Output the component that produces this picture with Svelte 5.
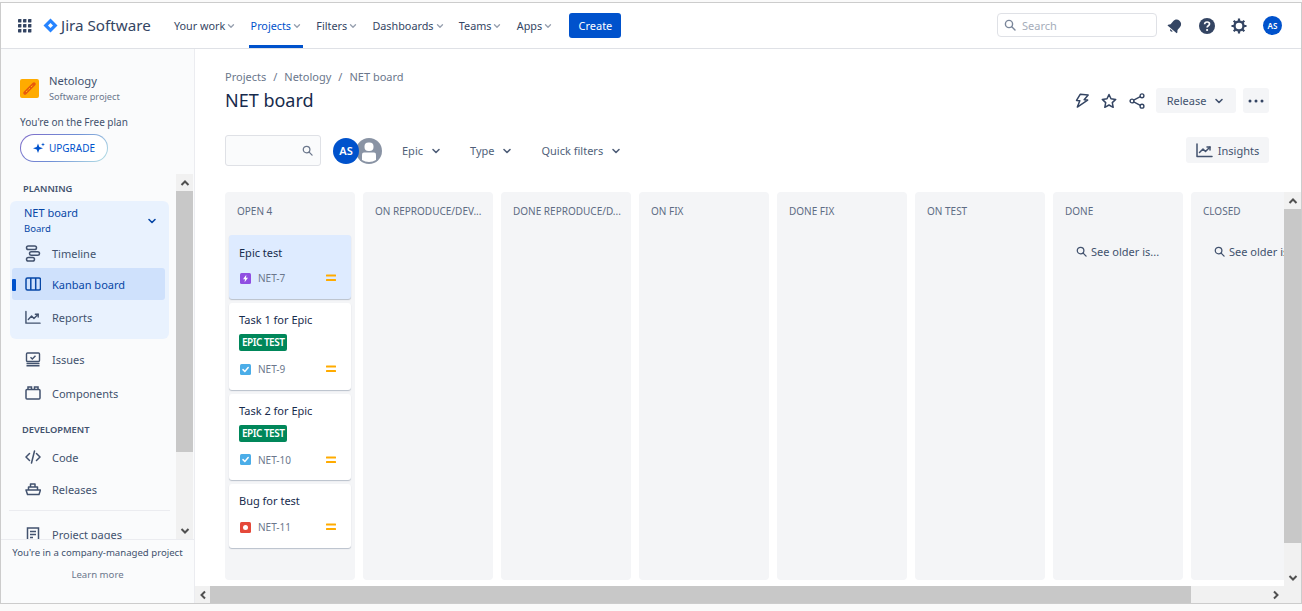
<script>
	const topNav = [
		{ label: 'Your work' },
		{ label: 'Projects', active: true },
		{ label: 'Filters' },
		{ label: 'Dashboards' },
		{ label: 'Teams' },
		{ label: 'Apps' }
	];

	const columns = [
		{ title: 'OPEN 4' },
		{ title: 'ON REPRODUCE/DEV...' },
		{ title: 'DONE REPRODUCE/D...' },
		{ title: 'ON FIX' },
		{ title: 'DONE FIX' },
		{ title: 'ON TEST' },
		{ title: 'DONE', older: true },
		{ title: 'CLOSED', older: true, cut: true }
	];

	const cards = [
		{ title: 'Epic test', key: 'NET-7', type: 'epic', selected: true },
		{ title: 'Task 1 for Epic', key: 'NET-9', type: 'task', epic: 'EPIC TEST' },
		{ title: 'Task 2 for Epic', key: 'NET-10', type: 'task', epic: 'EPIC TEST' },
		{ title: 'Bug for test', key: 'NET-11', type: 'bug' }
	];
</script>

{#snippet chevron(size = 12)}
	<svg class="chev" width={size} height={size} viewBox="0 0 12 12" fill="none">
		<path d="M3 4.500 6 7.500 9 4.500" stroke="currentColor" stroke-width="1.600" stroke-linecap="round" stroke-linejoin="round" />
	</svg>
{/snippet}

{#snippet loupe(size = 12)}
	<svg width={size} height={size} viewBox="0 0 12 12" fill="none">
		<circle cx="5" cy="5" r="3.600" stroke="currentColor" stroke-width="1.400" />
		<path d="M7.800 7.800 11 11" stroke="currentColor" stroke-width="1.400" stroke-linecap="round" />
	</svg>
{/snippet}

{#snippet arrow(dir)}
	<svg class="arrow {dir}" width="10" height="10" viewBox="0 0 10 10" fill="none">
		<path d="M1.500 7 5 3.500 8.500 7" stroke="#505050" stroke-width="2" />
	</svg>
{/snippet}

{#snippet chart()}
	<svg width="17" height="15" viewBox="0 0 17 15" fill="none" stroke="currentColor" stroke-width="1.500" stroke-linecap="round" stroke-linejoin="round">
		<path d="M1 1v12.500h15" />
		<path d="M3.500 9.500 7 6l2.500 2.500L14 4" />
		<path d="M11 4h3v3" />
	</svg>
{/snippet}

<div class="frame">
	<header class="topbar">
		<svg class="apps" width="14" height="14" viewBox="0 0 14 14" fill="#344563">
			{#each [0, 5, 10] as y}
				{#each [0, 5, 10] as x}
					<rect x={x} y={y} width="3.400" height="3.400" rx="0.400" />
				{/each}
			{/each}
		</svg>
		<svg class="logo" width="15" height="15" viewBox="0 0 15 15">
			<path d="M7.500.5 14.500 7.500 7.500 14.500.5 7.500Z" fill="#2684ff" />
			<path d="M7.500 5 10 7.500 7.500 10 5 7.500Z" fill="#fff" />
		</svg>
		<span class="brand">Jira Software</span>
		<nav class="topnav">
			{#each topNav as item}
				<span class="topnav-item" class:active={item.active}>
					{item.label}{@render chevron(10)}
				</span>
			{/each}
		</nav>
		<button class="create">Create</button>
		<div class="search">
			{@render loupe(12)}
			<span>Search</span>
		</div>
		<div class="top-icons">
			<svg width="16" height="16" viewBox="0 0 16 16" fill="#344563">
				<g transform="rotate(40 8 8)">
					<path d="M8 1C5.400 1 3.500 3 3.500 5.500v4L2 11.500v1h12v-1l-1.500-2v-4C12.500 3 10.600 1 8 1Z" />
					<path d="M6.200 13.500a1.900 1.900 0 0 0 3.600 0Z" />
				</g>
			</svg>
			<svg width="18" height="18" viewBox="0 0 18 18">
				<circle cx="9" cy="9" r="8" fill="#344563" />
				<path d="M6.600 7.200C6.700 5.800 7.700 5 9.100 5c1.400 0 2.400.8 2.400 2 0 1.900-2.400 1.700-2.400 3.600" fill="none" stroke="#fff" stroke-width="1.700" />
				<circle cx="9.100" cy="13" r="1.100" fill="#fff" />
			</svg>
			<svg width="16" height="16" viewBox="0 0 16 16" fill="none" stroke="#344563">
				<circle cx="8" cy="8" r="4.500" stroke-width="2.400" />
				<path d="M8 .5v2.500M8 13v2.500M.5 8H3M13 8h2.500M2.700 2.700l1.800 1.800M11.500 11.500l1.800 1.800M13.300 2.700l-1.800 1.800M4.500 11.500l-1.800 1.800" stroke-width="2.200" />
			</svg>
			<span class="avatar small">AS</span>
		</div>
	</header>

	<div class="body">
		<aside class="sidebar">
			<div class="project">
				<svg class="project-logo" width="19" height="19" viewBox="0 0 19 19">
					<rect width="19" height="19" rx="2" fill="#ffab00" />
					<path d="M5 14 14 5" stroke="#e8590c" stroke-width="3.500" stroke-linecap="round" />
					<path d="M6 13 13 6" stroke="#ffc400" stroke-width="1" stroke-dasharray="2 1.500" />
				</svg>
				<div>
					<div class="project-name">Netology</div>
					<div class="project-type">Software project</div>
				</div>
			</div>
			<div class="plan">You're on the Free plan</div>
			<button class="upgrade">
				<svg width="12" height="12" viewBox="0 0 12 12" fill="#0052cc">
					<path d="M5 1.500 6.300 5 10 6.300 6.300 7.500 5 11 3.700 7.500 0 6.300 3.700 5Z" />
					<path d="M10 .5 10.500 2 12 2.500 10.500 3 10 4.500 9.500 3 8 2.500 9.500 2Z" />
				</svg>
				UPGRADE
			</button>

			<div class="side-scroll">
				<div class="side-list">
					<h4 class="planning">PLANNING</h4>
					<div class="group">
						<div class="group-head">
							<div>
								<div class="group-title">NET board</div>
								<div class="group-sub">Board</div>
							</div>
							{@render chevron(12)}
						</div>
						<div class="side-item first">
							<svg width="16" height="17" viewBox="0 0 16 17" fill="none" stroke="currentColor" stroke-width="1.500">
								<rect x="1.500" y="1" width="10" height="3.600" rx="1.800" />
								<rect x="4.500" y="6.700" width="10" height="3.600" rx="1.800" />
								<rect x="1.500" y="12.400" width="8" height="3.600" rx="1.800" />
							</svg>
							Timeline
						</div>
						<div class="side-item selected">
							<span class="marker"></span>
							<svg width="16" height="14" viewBox="0 0 16 14" fill="none" stroke="currentColor" stroke-width="1.500">
								<rect x="1" y="1" width="14.500" height="12" rx="1.500" />
								<path d="M5.800 1v12M10.700 1v12" />
							</svg>
							Kanban board
						</div>
						<div class="side-item reports">
							{@render chart()}
							Reports
						</div>
					</div>

					<div class="side-item loose issues">
						<svg width="16" height="15" viewBox="0 0 16 15" fill="none" stroke="currentColor" stroke-width="1.400">
							<rect x="1.500" y="1" width="13" height="8.500" rx="1" />
							<path d="M5.500 5.300 7.300 7l3.200-3.300" />
							<path d="M1.500 11.500h13M1.500 13.800h13" stroke-width="1.600" />
						</svg>
						Issues
					</div>
					<div class="side-item loose">
						<svg width="16" height="14" viewBox="0 0 16 14" fill="none" stroke="currentColor" stroke-width="1.500">
							<rect x="1" y="3.500" width="14" height="9.500" rx="1" />
							<path d="M3 3.500V1h3.500v2.500M9.500 3.500V1H13v2.500" />
						</svg>
						Components
					</div>

					<h4 class="development">DEVELOPMENT</h4>
					<div class="side-item dev">
						<svg width="16" height="14" viewBox="0 0 16 14" fill="none" stroke="currentColor" stroke-width="1.500" stroke-linecap="round">
							<path d="M4.500 3.500 1 7l3.500 3.500M11.500 3.500 15 7l-3.500 3.500M9.500 1 6.500 13" />
						</svg>
						Code
					</div>
					<div class="side-item dev">
						<svg width="16" height="14" viewBox="0 0 16 14" fill="none" stroke="currentColor" stroke-width="1.500" stroke-linejoin="round">
							<path d="M1 8h14.500l-1.500 4.500H2.500ZM3.500 8V5h9v3M5.500 5V2h4.500v3" />
						</svg>
						Releases
					</div>
					<div class="side-divider"></div>
					<div class="side-item loose pages">
						<svg width="13" height="15" viewBox="0 0 13 15" fill="none" stroke="currentColor" stroke-width="1.500">
							<path d="M1 1h11v13H1ZM3.500 4.500h6M3.500 7.500h6M3.500 10.500h3" />
						</svg>
						Project pages
					</div>
				</div>
				<div class="vscroll">
					<div class="sb-btn">{@render arrow('up')}</div>
					<div class="sb-thumb side-thumb"></div>
					<div class="sb-track"></div>
					<div class="sb-btn">{@render arrow('down')}</div>
				</div>
			</div>

			<div class="side-foot">
				<div>You're in a company-managed project</div>
				<div class="learn">Learn more</div>
			</div>
		</aside>

		<main class="main">
			<div class="crumbs">
				<span>Projects</span><i>/</i><span>Netology</span><i>/</i><span>NET board</span>
			</div>
			<div class="title-row">
				<h1>NET board</h1>
				<div class="actions">
					<svg width="14" height="16" viewBox="0 0 14 16" fill="none" stroke="#344563" stroke-width="1.500" stroke-linejoin="round">
						<path d="M4.500 1.500h8L9 6.500h3.500L3 14.500l1.800-6.500H1.500Z" transform="rotate(6 7 8)" />
					</svg>
					<svg width="16" height="16" viewBox="0 0 16 16" fill="none" stroke="#344563" stroke-width="1.500" stroke-linejoin="round">
						<path d="M8 1.500 10 5.800l4.700.6-3.400 3.200.9 4.700L8 12l-4.200 2.300.9-4.700L1.300 6.400 6 5.800Z" />
					</svg>
					<svg width="16" height="16" viewBox="0 0 16 16" fill="none" stroke="#344563" stroke-width="1.400">
						<circle cx="3" cy="8" r="1.900" />
						<circle cx="13" cy="2.800" r="1.900" />
						<circle cx="13" cy="13.200" r="1.900" />
						<path d="M4.700 7.100 11.300 3.700M4.700 8.900l6.600 3.400" />
					</svg>
					<button class="btn release">Release {@render chevron(12)}</button>
					<button class="btn more" aria-label="More">
						<svg width="16" height="4" viewBox="0 0 16 4" fill="#344563">
							<circle cx="2" cy="2" r="1.500" /><circle cx="8" cy="2" r="1.500" /><circle cx="14" cy="2" r="1.500" />
						</svg>
					</button>
				</div>
			</div>
			<div class="toolbar">
				<div class="board-search">{@render loupe(11)}</div>
				<div class="people">
					<span class="avatar">AS</span>
					<span class="ghost">
						<svg width="26" height="26" viewBox="0 0 26 26">
							<circle cx="13" cy="13" r="13" fill="#8993a4" />
							<rect x="8.500" y="4.500" width="9" height="8.500" rx="4" fill="#fff" />
							<path d="M6 16.500q0-2 2-2h10q2 0 2 2V22q-3 2-7 2t-7-2Z" fill="#fff" />
						</svg>
					</span>
				</div>
				<span class="filter">Epic {@render chevron(12)}</span>
				<span class="filter">Type {@render chevron(12)}</span>
				<span class="filter">Quick filters {@render chevron(12)}</span>
				<button class="btn insights">{@render chart()} Insights</button>
			</div>

			<div class="board-wrap">
				<div class="board-row">
					<div class="board">
						{#each columns as col, i}
							<section class="column">
								<div class="col-title">{col.title}</div>
								{#if i === 0}
									<div class="cards">
										{#each cards as card}
											<article class="card" class:selected={card.selected} class:has-epic={card.epic}>
												<div class="card-title">{card.title}</div>
												{#if card.epic}
													<span class="epic">{card.epic}</span>
												{/if}
												<div class="card-foot">
													<svg class="type" width="11" height="11" viewBox="0 0 11 11">
														{#if card.type === 'epic'}
															<rect width="11" height="11" rx="1.500" fill="#904ee2" />
															<path d="M6.300 1.800 3 6.200h2l-.4 3L8 4.800H6Z" fill="#fff" />
														{:else if card.type === 'task'}
															<rect width="11" height="11" rx="1.500" fill="#4bade8" />
															<path d="M3 5.600 4.900 7.500 8.200 3.600" fill="none" stroke="#fff" stroke-width="1.500" stroke-linecap="round" />
														{:else}
															<rect width="11" height="11" rx="1.500" fill="#e5493a" />
															<circle cx="5.500" cy="5.500" r="2.500" fill="#fff" />
														{/if}
													</svg>
													<span class="key">{card.key}</span>
													<svg class="prio" width="10" height="8" viewBox="0 0 10 8" fill="#ffab00">
														<rect y="0.500" width="10" height="2" rx="0.500" />
														<rect y="5" width="10" height="2" rx="0.500" />
													</svg>
												</div>
											</article>
										{/each}
									</div>
								{/if}
								{#if col.older}
									<div class="older">{@render loupe(11)}<span>See older is{col.cut ? 'sues' : '...'}</span></div>
								{/if}
							</section>
						{/each}
					</div>
					<div class="vscroll">
						<div class="sb-btn">{@render arrow('up')}</div>
						<div class="sb-thumb board-thumb"></div>
						<div class="sb-track"></div>
						<div class="sb-btn">{@render arrow('down')}</div>
					</div>
				</div>
				<div class="hscroll">
					<div class="sb-btn wide">{@render arrow('left')}</div>
					<div class="h-thumb"></div>
					<div class="h-track">{@render arrow('right')}</div>
				</div>
			</div>
		</main>
	</div>
</div>

<style>
	:global(body) {
		background: #fafafa;
	}

	.frame {
		box-sizing: border-box;
		width: 1302px;
		height: 602px;
		margin-top: 2px;
		border: 1px solid #ccc;
		background: #fff;
		display: flex;
		flex-direction: column;
		overflow: hidden;
		font-family: "Noto Sans", "Open Sans", sans-serif;
		font-size: 11px;
		color: #42526e;
	}

	button {
		font-family: inherit;
		border: 0;
		padding: 0;
	}

	/* top bar */
	.topbar {
		flex: none;
		height: 45px;
		border-bottom: 1px solid #dfe1e6;
		display: flex;
		align-items: center;
	}

	.apps {
		margin-left: 17px;
	}

	.logo {
		margin-left: 11px;
	}

	.brand {
		margin: 0 0 1px 3px;
		font-size: 15.200px;
		color: #344563;
		width: 97px;
		white-space: nowrap;
	}

	.topnav {
		display: flex;
		align-self: stretch;
		margin-left: 9px;
	}

	.topnav-item {
		position: relative;
		display: flex;
		align-items: center;
		gap: 1px;
		padding: 0 7.300px 0 7px;
		font-size: 10.800px;
		white-space: nowrap;
		color: #344563;
	}

	.topnav-item .chev {
		color: #97a0af;
	}

	.topnav-item.active {
		color: #0052cc;
	}

	.topnav-item.active::after {
		content: "";
		position: absolute;
		left: 5px;
		right: 6px;
		bottom: 0;
		height: 3px;
		background: #0052cc;
	}

	.create {
		margin-left: 9px;
		width: 52px;
		height: 25px;
		border-radius: 3px;
		background: #0052cc;
		color: #fff;
		font-size: 11px;
	}

	.search {
		margin: 0 0 1px auto;
		box-sizing: border-box;
		width: 160px;
		height: 24px;
		border: 1px solid #dfe1e6;
		border-radius: 4px;
		display: flex;
		align-items: center;
		gap: 6px;
		padding-left: 6px;
		color: #7a869a;
		font-size: 11px;
	}

	.search span {
		color: #a5adba;
	}

	.top-icons {
		display: flex;
		align-items: center;
		gap: 15px;
		margin: 0 19px 0 10px;
	}

	.avatar {
		position: relative;
		z-index: 1;
		width: 26px;
		height: 26px;
		border-radius: 50%;
		background: #0052cc;
		color: #fff;
		font-size: 11px;
		font-weight: 600;
		display: flex;
		align-items: center;
		justify-content: center;
		flex: none;
	}

	.avatar.small {
		width: 19px;
		height: 19px;
		font-size: 8px;
		margin-left: 1px;
	}

	/* sidebar */
	.body {
		flex: 1;
		display: flex;
		min-height: 0;
	}

	.sidebar {
		flex: none;
		width: 194px;
		box-sizing: border-box;
		background: #fafbfc;
		border-right: 1px solid #ebecf0;
		display: flex;
		flex-direction: column;
		padding-top: 24px;
	}

	.project {
		display: flex;
		align-items: center;
		gap: 10px;
		padding-left: 19px;
	}

	.project-name {
		font-size: 11.200px;
		line-height: 15px;
	}

	.project-type {
		font-size: 9.200px;
		line-height: 14px;
		margin-top: 2px;
		color: #6b778c;
	}

	.plan {
		margin: 10px 0 0 19px;
		font-size: 10px;
		line-height: 16px;
	}

	.upgrade {
		margin: 4px 0 0 19px;
		width: 88px;
		height: 28px;
		border-radius: 14px;
		border: 1px solid transparent;
		background: linear-gradient(#fff, #fff) padding-box, linear-gradient(135deg, #7f6bc9, #6f8fd6 50%, #b7e3e6) border-box;
		color: #0052cc;
		font-size: 10px;
		display: flex;
		align-items: center;
		justify-content: center;
		gap: 4px;
		flex: none;
	}

	.side-scroll {
		flex: 1;
		min-height: 0;
		display: flex;
		margin-top: 12px;
	}

	.side-list {
		flex: none;
		width: 175px;
		overflow: hidden;
	}

	h4 {
		margin: 0;
		font-size: 9.300px;
		font-weight: 600;
		line-height: 14px;
	}

	.planning {
		padding: 8px 0 0 22px;
	}

	.development {
		padding: 13px 0 4px 21px;
	}

	.group {
		margin: 5px 7px 0 9px;
		height: 138px;
		box-sizing: border-box;
		background: #e9f2fe;
		border-radius: 6px;
		padding: 0 4px 0 2px;
	}

	.group-head {
		display: flex;
		align-items: center;
		justify-content: space-between;
		padding: 4px 7px 0 12px;
		color: #0747a6;
	}

	.group-title {
		line-height: 16px;
	}

	.group-sub {
		font-size: 9.500px;
		line-height: 14px;
		margin-top: 1px;
	}

	.side-item {
		position: relative;
		display: flex;
		align-items: center;
		height: 32px;
		padding-left: 13px;
		gap: 11px;
		white-space: nowrap;
	}

	.side-item svg {
		flex: none;
		width: 16px;
	}

	.side-item.first {
		margin-top: 2px;
		height: 30px;
	}

	.side-item.selected {
		background: #cfe1fc;
		border-radius: 3px;
		color: #0747a6;
	}

	.side-item.reports {
		margin-top: 1px;
	}

	.marker {
		position: absolute;
		left: 0;
		top: 11px;
		width: 4px;
		height: 12px;
		background: #0052cc;
		border-radius: 1px;
	}

	.side-item.loose {
		padding-left: 24px;
		height: 34px;
	}

	.side-item.dev {
		padding-left: 24px;
	}

	.issues {
		margin-top: 3px;
	}

	.side-divider {
		height: 1px;
		margin: 5px 6px 0 8px;
		background: #ebecf0;
	}

	.side-item.pages {
		margin-top: 6px;
	}

	.vscroll {
		flex: none;
		width: 17px;
		display: flex;
		flex-direction: column;
		background: #f1f1f1;
	}

	.sb-btn {
		flex: none;
		height: 17px;
		display: flex;
		align-items: center;
		justify-content: center;
	}

	.sb-thumb {
		flex: none;
		background: #c8c8c8;
	}

	.sb-track {
		flex: 1;
	}

	.side-thumb {
		height: 261px;
	}

	.board-thumb {
		height: 334px;
	}

	.arrow.down {
		transform: rotate(180deg);
	}

	.arrow.left {
		transform: rotate(-90deg);
	}

	.arrow.right {
		transform: rotate(90deg);
	}

	.side-foot {
		flex: none;
		height: 64px;
		box-sizing: border-box;
		border-top: 1px solid #ebecf0;
		text-align: center;
		padding-top: 5px;
		font-size: 9.600px;
		line-height: 15px;
	}

	.learn {
		margin-top: 7px;
		color: #6b778c;
	}

	/* main */
	.main {
		flex: 1;
		min-width: 0;
		display: flex;
		flex-direction: column;
	}

	.crumbs {
		margin: 20px 0 0 30px;
		line-height: 16px;
		color: #6b778c;
		display: flex;
	}

	.crumbs i {
		font-style: normal;
		margin: 0 7px;
	}

	.title-row {
		display: flex;
		align-items: center;
		justify-content: space-between;
		margin: 1px 32px 0 30px;
		height: 28px;
	}

	h1 {
		margin: 0;
		font-size: 18px;
		font-weight: 400;
		color: #172b4d;
	}

	.actions {
		display: flex;
		align-items: center;
		gap: 12px;
		margin-top: 1px;
	}

	.btn {
		background: #f4f5f7;
		color: #42526e;
		border-radius: 3px;
		height: 25px;
		font-size: 11px;
		display: flex;
		align-items: center;
		justify-content: center;
	}

	.release {
		width: 80px;
		gap: 7px;
		margin-left: -1px;
		margin-right: -5px;
	}

	.more {
		width: 26px;
	}

	.toolbar {
		display: flex;
		align-items: center;
		margin: 21px 32px 0 30px;
		height: 31px;
	}

	.board-search {
		box-sizing: border-box;
		width: 96px;
		height: 31px;
		background: #fafbfc;
		border: 1px solid #dfe1e6;
		border-radius: 3px;
		display: flex;
		align-items: center;
		justify-content: flex-end;
		padding-right: 7px;
		color: #6b778c;
	}

	.people {
		display: flex;
		margin: 0 14px 0 12px;
	}

	.ghost {
		margin-left: -3px;
		display: flex;
	}

	.filter {
		display: inline-flex;
		align-items: center;
		gap: 7px;
		margin: 0 22px 0 6px;
		color: #505f79;
		white-space: nowrap;
	}

	.insights {
		margin: 0 0 1px auto;
		width: 83px;
		height: 26px;
		gap: 5px;
	}

	.board-wrap {
		flex: 1;
		min-height: 0;
		display: flex;
		flex-direction: column;
		margin-top: 26px;
	}

	.board-row {
		flex: 1;
		min-height: 0;
		display: flex;
	}

	.board {
		flex: 1;
		min-width: 0;
		display: flex;
		gap: 8px;
		padding: 0 0 6px 30px;
		overflow: hidden;
	}

	.column {
		flex: none;
		width: 130px;
		box-sizing: border-box;
		background: #f4f5f7;
		border-radius: 4px;
	}

	.col-title {
		font-size: 10px;
		line-height: 14px;
		padding: 12px 0 0 12px;
		color: #5e6c84;
		white-space: nowrap;
		overflow: hidden;
	}

	.cards {
		display: flex;
		flex-direction: column;
		gap: 4px;
		padding: 17px 4px 0;
	}

	.card {
		background: #fff;
		border-radius: 3px;
		box-shadow: 0 1px 1px rgba(9, 30, 66, 0.25);
		padding: 9px 15px 0 10px;
	}

	.card.selected {
		background: #deebff;
		padding-top: 10px;
	}

	.card-title {
		line-height: 16px;
		color: #172b4d;
	}

	.epic {
		display: block;
		width: fit-content;
		margin-top: 6px;
		background: #00875a;
		color: #fff;
		font-size: 10px;
		font-weight: 600;
		line-height: 17px;
		letter-spacing: -0.500px;
		padding: 0 3px;
		border-radius: 2px;
	}

	.card-foot {
		display: flex;
		align-items: center;
		margin-top: 10px;
		height: 16px;
		padding-bottom: 13px;
	}

	.selected .card-foot {
		margin-top: 9px;
	}

	.has-epic .card-foot {
		padding-bottom: 12.500px;
	}

	.type {
		margin-left: 1px;
	}

	.key {
		margin-left: 7px;
		font-size: 10px;
		color: #6b778c;
	}

	.prio {
		margin-left: auto;
	}

	.older {
		display: flex;
		align-items: center;
		gap: 4px;
		padding: 26px 0 0 23px;
		color: #42526e;
		white-space: nowrap;
	}

	.hscroll {
		flex: none;
		height: 17px;
		display: flex;
		background: #f1f1f1;
	}

	.sb-btn.wide {
		width: 15px;
	}

	.h-thumb {
		width: 981px;
		background: #c8c8c8;
	}

	.h-track {
		flex: 1;
		display: flex;
		align-items: center;
		justify-content: flex-end;
		padding-right: 20px;
	}
</style>
